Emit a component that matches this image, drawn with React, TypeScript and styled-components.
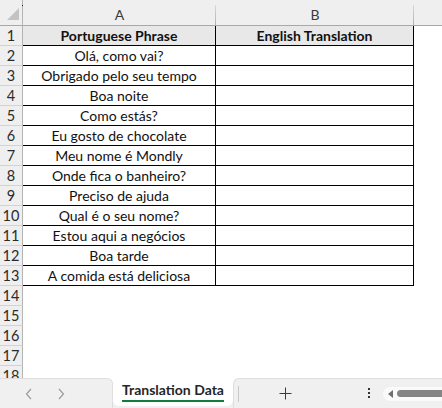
import React from "react";
import styled, { createGlobalStyle } from "styled-components";

const Global = createGlobalStyle`
  html, body { margin: 0; padding: 0; background: #fff; }
  body { width: 442px; height: 408px; overflow: hidden; font-family: "Lato", "Liberation Sans", sans-serif; }
  * { box-sizing: border-box; }
`;

const Page = styled.div`
  width: 442px;
  height: 408px;
  display: flex;
  flex-direction: column;
  overflow: hidden;
`;

const SheetArea = styled.div`
  height: 378px;
  overflow: hidden;
  display: grid;
  grid-template-columns: 23px 193px 198px 1fr;
  grid-template-rows: 26px;
  grid-auto-rows: 20px;
`;

const Corner = styled.div`
  position: relative;
  background: #efefef;
  border-right: 1px solid #b4b4b4;
  border-bottom: 1px solid #a8a8a8;
`;

const CornerDot = styled.span`
  position: absolute;
  right: -1px;
  top: 5px;
  width: 1px;
  height: 1px;
  background: #222;
`;

const CornerTriangle = styled.svg`
  position: absolute;
  left: 7px;
  top: 8px;
`;

const ColHead = styled.div<{ $last?: boolean }>`
  position: relative;
  background: #efefef;
  border-bottom: 1px solid #a8a8a8;
  display: flex;
  align-items: center;
  justify-content: center;
  padding-top: 4px;
  font-size: 14px;
  color: #3a3a3a;
  &::after {
    content: "";
    display: ${(p) => (p.$last ? "none" : "block")};
    position: absolute;
    right: 0;
    top: 5px;
    bottom: 0;
    width: 1px;
    background: linear-gradient(#d8d8d8, #b0b0b0);
  }
`;

const RowHead = styled.div`
  background: #efefef;
  border-right: 1px solid #b4b4b4;
  border-bottom: 1px solid #d2d2d2;
  display: flex;
  align-items: center;
  justify-content: center;
  font-size: 14.5px;
  color: #2a2a2a;
  line-height: 1;
  padding-top: 1px;
`;

const Cell = styled.div<{ $head?: boolean }>`
  border-right: 1px solid #000;
  border-bottom: 1px solid #000;
  background: ${(p) => (p.$head ? "#e8e8e8" : "#fff")};
  font-weight: ${(p) => (p.$head ? 700 : 400)};
  font-size: 14px;
  color: #111;
  display: flex;
  align-items: center;
  justify-content: center;
  white-space: nowrap;
  line-height: 1;
  padding-top: 1px;
`;

const Empty = styled.div``;

const TabBar = styled.div`
  height: 30px;
  display: flex;
  background: #fff;
`;

const SidePanel = styled.div<{ $side: "left" | "right" }>`
  background: #f0f0f0;
  border-top: 1px solid #dedede;
  ${(p) =>
    p.$side === "left"
      ? `width: 113px; border-right: 1px solid #dedede; border-top-right-radius: 6px;`
      : `flex: 1; border-left: 1px solid #dedede; border-top-left-radius: 6px;`}
  display: flex;
  align-items: center;
`;

const TabSlot = styled.div`
  width: 120px;
  background: linear-gradient(to bottom, #fff 0 50%, #f0f0f0 50%);
  display: flex;
  flex-direction: column;
`;

const Tab = styled.div`
  height: 28px;
  background: #fff;
  border-bottom-left-radius: 6px;
  border-bottom-right-radius: 6px;
  display: flex;
  flex-direction: column;
  align-items: center;
  padding-top: 4px;
`;

const TabLabel = styled.div`
  font-size: 14px;
  font-weight: 700;
  color: #262626;
  padding: 0 0 2px;
  border-bottom: 2px solid #107c41;
  line-height: 16px;
  white-space: nowrap;
`;

const NavButton = styled.div`
  width: 32px;
  display: flex;
  justify-content: center;
  align-items: center;
`;

const NavGroup = styled.div`
  display: flex;
  padding-left: 13px;
`;

const Divider = styled.div`
  width: 1px;
  height: 16px;
  background: #c8c8c8;
  margin-left: 4px;
`;

const AddButton = styled.div`
  margin-left: 40px;
  display: flex;
  align-items: center;
`;

const MoreButton = styled.div`
  margin-left: 76px;
  display: flex;
  align-items: center;
`;

const Scroll = styled.div`
  margin-left: 12px;
  flex: 1;
  height: 14px;
  background: #fafafa;
  border-radius: 7px 0 0 7px;
  display: flex;
  align-items: center;
  padding-left: 5px;
  gap: 4px;
`;

const Thumb = styled.div`
  flex: 1;
  height: 7px;
  background: #858585;
  border-radius: 4px 0 0 4px;
`;

const rows = [
  "Olá, como vai?",
  "Obrigado pelo seu tempo",
  "Boa noite",
  "Como estás?",
  "Eu gosto de chocolate",
  "Meu nome é Mondly",
  "Onde fica o banheiro?",
  "Preciso de ajuda",
  "Qual é o seu nome?",
  "Estou aqui a negócios",
  "Boa tarde",
  "A comida está deliciosa",
];

export default function App() {
  return (
    <Page>
      <Global />
      <SheetArea>
        <Corner>
          <CornerDot />
          <CornerTriangle width="13" height="12" viewBox="0 0 13 12">
            <polygon points="12,0 12,12 0,12" fill="#c3c3c3" />
          </CornerTriangle>
        </Corner>
        <ColHead>A</ColHead>
        <ColHead>B</ColHead>
        <ColHead $last />

        <RowHead>1</RowHead>
        <Cell $head>Portuguese Phrase</Cell>
        <Cell $head>English Translation</Cell>
        <Empty />

        {rows.map((r, i) => (
          <React.Fragment key={i}>
            <RowHead>{i + 2}</RowHead>
            <Cell>{r}</Cell>
            <Cell />
            <Empty />
          </React.Fragment>
        ))}

        {[14, 15, 16, 17, 18].map((n) => (
          <React.Fragment key={n}>
            <RowHead>{n}</RowHead>
            <Empty />
            <Empty />
            <Empty />
          </React.Fragment>
        ))}
      </SheetArea>

      <TabBar>
        <SidePanel $side="left">
          <NavGroup>
            <NavButton>
              <svg width="8" height="12" viewBox="0 0 8 12">
                <polyline points="6,1 1.5,6 6,11" fill="none" stroke="#9c9c9c" strokeWidth="1.2" />
              </svg>
            </NavButton>
            <NavButton>
              <svg width="8" height="12" viewBox="0 0 8 12">
                <polyline points="2,1 6.5,6 2,11" fill="none" stroke="#9c9c9c" strokeWidth="1.2" />
              </svg>
            </NavButton>
          </NavGroup>
        </SidePanel>
        <TabSlot>
          <Tab>
            <TabLabel>Translation Data</TabLabel>
          </Tab>
        </TabSlot>
        <SidePanel $side="right">
          <Divider />
          <AddButton>
            <svg width="13" height="13" viewBox="0 0 13 13">
              <line x1="6.5" y1="0.5" x2="6.5" y2="12.5" stroke="#3a3a3a" strokeWidth="1" />
              <line x1="0.5" y1="6.5" x2="12.5" y2="6.5" stroke="#3a3a3a" strokeWidth="1" />
            </svg>
          </AddButton>
          <MoreButton>
            <svg width="3" height="11" viewBox="0 0 3 11">
              <rect x="0" y="0" width="2" height="2" fill="#333" />
              <rect x="0" y="4" width="2" height="2" fill="#333" />
              <rect x="0" y="8" width="2" height="2" fill="#333" />
            </svg>
          </MoreButton>
          <Scroll>
            <svg width="5" height="8" viewBox="0 0 5 8">
              <polygon points="5,0 5,8 0,4" fill="#6e6e6e" />
            </svg>
            <Thumb />
          </Scroll>
        </SidePanel>
      </TabBar>
    </Page>
  );
}
